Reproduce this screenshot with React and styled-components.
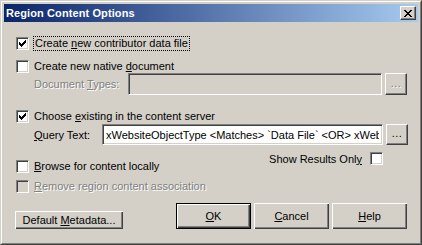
import React from "react";
import styled, { createGlobalStyle } from "styled-components";

const GlobalStyle = createGlobalStyle`
  html, body {
    margin: 0;
    padding: 0;
    background: #d4d0c8;
  }
  * {
    box-sizing: border-box;
  }
`;

const Window = styled.div`
  width: 422px;
  height: 245px;
  border: 1px solid;
  border-color: #d4d0c8 #404040 #404040 #d4d0c8;
  background: #d4d0c8;
  font-family: "Liberation Sans", Arial, sans-serif;
  font-size: 11px;
  color: #000;
`;

const Frame = styled.div`
  height: 100%;
  border: 1px solid;
  border-color: #fff #808080 #808080 #fff;
  padding: 2px;
  display: flex;
  flex-direction: column;
`;

const TitleBar = styled.div`
  height: 18px;
  flex: none;
  display: flex;
  align-items: center;
  justify-content: space-between;
  padding: 0 2px;
  background: linear-gradient(to right, #0a246a, #a6caf0);
`;

const Title = styled.span`
  color: #fff;
  font-weight: bold;
  font-size: 11px;
  letter-spacing: 0.1px;
`;

const CaptionButton = styled.div`
  width: 16px;
  height: 14px;
  background: #d4d0c8;
  border: 1px solid;
  border-color: #fff #404040 #404040 #fff;
  box-shadow: inset -1px -1px #808080;
  display: flex;
  align-items: center;
  justify-content: center;
`;

const Body = styled.div`
  flex: 1;
  display: flex;
  flex-direction: column;
  padding: 15px 11px 0 12px;
`;

const CheckRow = styled.div`
  display: flex;
  align-items: center;
  height: 13px;
  margin-top: ${(p) => p.$top || 0}px;
  color: ${(p) => (p.$disabled ? "#808080" : "#000")};
  text-shadow: ${(p) => (p.$disabled ? "1px 1px 0 #fff" : "none")};
`;

const Box = styled.span`
  width: 13px;
  height: 13px;
  flex: none;
  background: ${(p) => (p.$disabled ? "#d4d0c8" : "#fff")};
  border: 1px solid;
  border-color: #808080 #fff #fff #808080;
  box-shadow: inset 1px 1px #404040, inset -1px -1px #d4d0c8;
  display: flex;
  align-items: center;
  justify-content: center;
`;

const Label = styled.span`
  margin-left: ${(p) => (p.$focus ? 4 : 5)}px;
  padding: 0 ${(p) => (p.$focus ? 1 : 0)}px;
  line-height: 13px;
  border: ${(p) => (p.$focus ? "1px dotted #000" : "none")};
  white-space: nowrap;
`;

const Key = styled.span`
  text-decoration: underline;
`;

const FieldRow = styled.div`
  display: flex;
  align-items: center;
  height: ${(p) => p.$h}px;
  margin-top: ${(p) => p.$top || 0}px;
  padding-left: 18px;
`;

const FieldLabel = styled.span`
  width: ${(p) => p.$w}px;
  flex: none;
  white-space: nowrap;
  color: ${(p) => (p.$disabled ? "#808080" : "#000")};
  text-shadow: ${(p) => (p.$disabled ? "1px 1px 0 #fff" : "none")};
`;

const TextField = styled.input`
  width: ${(p) => p.$w}px;
  height: 100%;
  flex: none;
  margin: 0;
  outline: none;
  font: inherit;
  color: #000;
  background: ${(p) => (p.disabled ? "#d4d0c8" : "#fff")};
  border: 1px solid;
  border-color: #808080 #fff #fff #808080;
  box-shadow: inset 1px 1px #404040, inset -1px -1px #d4d0c8;
  padding: 0 3px;
`;

const BrowseButton = styled.div`
  width: 22px;
  height: ${(p) => p.$h}px;
  margin-left: 3px;
  flex: none;
  border: 1px solid;
  border-color: #fff #404040 #404040 #fff;
  box-shadow: inset -1px -1px #808080;
  display: flex;
  align-items: center;
  justify-content: center;
  padding-bottom: 3px;
  color: ${(p) => (p.$disabled ? "#808080" : "#000")};
  text-shadow: ${(p) => (p.$disabled ? "1px 1px 0 #fff" : "none")};
  letter-spacing: 0.5px;
`;

const Lower = styled.div`
  display: flex;
  justify-content: space-between;
  align-items: flex-start;
  margin-top: 7px;
  padding-right: 24px;
`;

const LeftColumn = styled.div`
  display: flex;
  flex-direction: column;
  padding-top: 8px;
`;

const ShowResults = styled.div`
  display: flex;
  align-items: center;
  height: 13px;
  gap: 8px;
  white-space: nowrap;
`;

const ButtonBar = styled.div`
  display: flex;
  align-items: flex-end;
  justify-content: space-between;
  margin-top: 10px;
  margin-left: -1px;
`;

const ButtonGroup = styled.div`
  display: flex;
  gap: 3px;
`;

const Button = styled.div`
  width: ${(p) => p.$w}px;
  height: ${(p) => p.$h}px;
  display: flex;
  align-items: center;
  justify-content: center;
  white-space: nowrap;
  border: ${(p) => (p.$default ? "1px solid #000" : "none")};
  box-shadow: inset 1px 1px #fff, inset -1px -1px #404040,
    inset -2px -2px #808080;
  padding-bottom: 1px;
`;

const Check = () => (
  <svg width="7" height="7" viewBox="0 0 7 7" shapeRendering="crispEdges">
    <path
      d="M0 2h1v3h-1z M1 3h1v3h-1z M2 4h1v3h-1z M3 3h1v3h-1z M4 2h1v3h-1z M5 1h1v3h-1z M6 0h1v3h-1z"
      fill="#000"
    />
  </svg>
);

const CloseGlyph = () => (
  <svg width="8" height="7" viewBox="0 0 8 7" shapeRendering="crispEdges">
    <path
      d="M0 0h2v1h-2z M6 0h2v1h-2z M1 1h2v1h-2z M5 1h2v1h-2z M2 2h4v1h-4z M3 3h2v1h-2z M2 4h4v1h-4z M1 5h2v1h-2z M5 5h2v1h-2z M0 6h2v1h-2z M6 6h2v1h-2z"
      fill="#000"
    />
  </svg>
);

const query =
  "xWebsiteObjectType <Matches> `Data File` <OR> xWebsiteObjectType <Matches> `Native Document`";

export default function App() {
  return (
    <>
      <GlobalStyle />
      <Window>
        <Frame>
          <TitleBar>
            <Title>Region Content Options</Title>
            <CaptionButton>
              <CloseGlyph />
            </CaptionButton>
          </TitleBar>
          <Body>
            <CheckRow>
              <Box>
                <Check />
              </Box>
              <Label $focus>
                Create <Key>n</Key>ew contributor data file
              </Label>
            </CheckRow>
            <CheckRow $top={10}>
              <Box />
              <Label>
                Create new native <Key>d</Key>ocument
              </Label>
            </CheckRow>
            <FieldRow $h={22} $top={0}>
              <FieldLabel $w={94} $disabled>
                Document <Key>T</Key>ypes:
              </FieldLabel>
              <TextField $w={254} disabled readOnly value="" />
              <BrowseButton $h={22} $disabled>
                ...
              </BrowseButton>
            </FieldRow>
            <CheckRow $top={15}>
              <Box>
                <Check />
              </Box>
              <Label>
                Choose <Key>e</Key>xisting in the content server
              </Label>
            </CheckRow>
            <FieldRow $h={21} $top={1}>
              <FieldLabel $w={68}>
                <Key>Q</Key>uery Text:
              </FieldLabel>
              <TextField $w={281} readOnly value={query} />
              <BrowseButton $h={21}>...</BrowseButton>
            </FieldRow>
            <Lower>
              <LeftColumn>
                <CheckRow>
                  <Box />
                  <Label>
                    <Key>B</Key>rowse for content locally
                  </Label>
                </CheckRow>
                <CheckRow $top={7} $disabled>
                  <Box $disabled />
                  <Label>
                    <Key>R</Key>emove region content association
                  </Label>
                </CheckRow>
              </LeftColumn>
              <ShowResults>
                <span>
                  Show Results Onl<Key>y</Key>
                </span>
                <Box />
              </ShowResults>
            </Lower>
            <ButtonBar>
              <Button $w={108} $h={18}>
                <span>
                  Default <Key>M</Key>etadata...
                </span>
              </Button>
              <ButtonGroup>
                <Button $w={75} $h={26} $default>
                  <span>
                    <Key>O</Key>K
                  </span>
                </Button>
                <Button $w={75} $h={26}>
                  <span>
                    <Key>C</Key>ancel
                  </span>
                </Button>
                <Button $w={75} $h={26}>
                  <span>
                    <Key>H</Key>elp
                  </span>
                </Button>
              </ButtonGroup>
            </ButtonBar>
          </Body>
        </Frame>
      </Window>
    </>
  );
}
